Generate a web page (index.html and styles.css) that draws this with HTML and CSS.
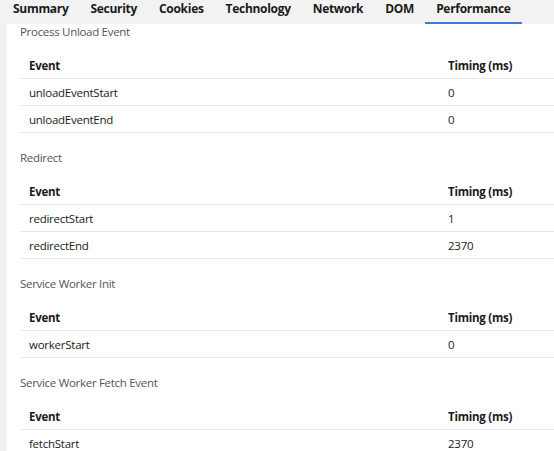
FILE: index.html
```html
<!DOCTYPE html>
<html>
<head>
<meta charset="utf-8">
<link rel="stylesheet" href="styles.css">
</head>
<body>
<div class="tabs">
  <div class="tab">Summary</div>
  <div class="tab">Security</div>
  <div class="tab">Cookies</div>
  <div class="tab">Technology</div>
  <div class="tab">Network</div>
  <div class="tab">DOM</div>
  <div class="tab active">Performance</div>
</div>
<div class="panel">
  <section class="sec">
    <div class="title">Process Unload Event</div>
    <table class="tbl">
      <thead><tr><th>Event</th><th class="time">Timing (ms)</th></tr></thead>
      <tbody>
        <tr><td>unloadEventStart</td><td>0</td></tr>
        <tr><td>unloadEventEnd</td><td>0</td></tr>
      </tbody>
    </table>
  </section>
  <section class="sec">
    <div class="title">Redirect</div>
    <table class="tbl">
      <thead><tr><th>Event</th><th class="time">Timing (ms)</th></tr></thead>
      <tbody>
        <tr><td>redirectStart</td><td>1</td></tr>
        <tr><td>redirectEnd</td><td>2370</td></tr>
      </tbody>
    </table>
  </section>
  <section class="sec">
    <div class="title">Service Worker Init</div>
    <table class="tbl">
      <thead><tr><th>Event</th><th class="time">Timing (ms)</th></tr></thead>
      <tbody>
        <tr><td>workerStart</td><td>0</td></tr>
      </tbody>
    </table>
  </section>
  <section class="sec">
    <div class="title">Service Worker Fetch Event</div>
    <table class="tbl">
      <thead><tr><th>Event</th><th class="time">Timing (ms)</th></tr></thead>
      <tbody>
        <tr><td>fetchStart</td><td>2370</td></tr>
      </tbody>
    </table>
  </section>
</div>
</body>
</html>
```
FILE: styles.css
```css
html, body {
  margin: 0;
  padding: 0;
  background: #f2f2f2;
  font-family: "Open Sans", "Noto Sans", sans-serif;
  color: #1a1a1a;
  overflow: hidden;
  height: 451px;
}
.tabs {
  display: flex;
  height: 24px;
  padding-left: 2px;
  box-sizing: border-box;
}
.tab {
  padding: 0 11px;
  font-size: 12px;
  font-weight: 700;
  line-height: 17px;
  height: 24px;
  box-sizing: border-box;
  border-bottom: 2px solid transparent;
  color: #1a1a1a;
  letter-spacing: -0.3px;
}
.tab.active {
  border-bottom-color: #3b7dd8;
}
.panel {
  margin-left: 7px;
  background: #fff;
  padding: 0 0 0 13px;
  height: 427px;
  box-sizing: border-box;
}
.sec {
  margin-bottom: 17px;
}
.title {
  font-size: 11.5px;
  line-height: 16px;
  color: #555;
  letter-spacing: -0.3px;
  margin-bottom: 12px;
}
.tbl {
  width: 100%;
  border-collapse: collapse;
  font-size: 11.5px;
  letter-spacing: -0.25px;
}
.tbl th, .tbl td {
  text-align: left;
  padding: 0 9px;
  height: 26px;
  border-bottom: 1px solid #e6e6e6;
  color: #1a1a1a;
}
.tbl th {
  font-weight: 700;
}
.tbl .time {
  width: 97px;
}
```
